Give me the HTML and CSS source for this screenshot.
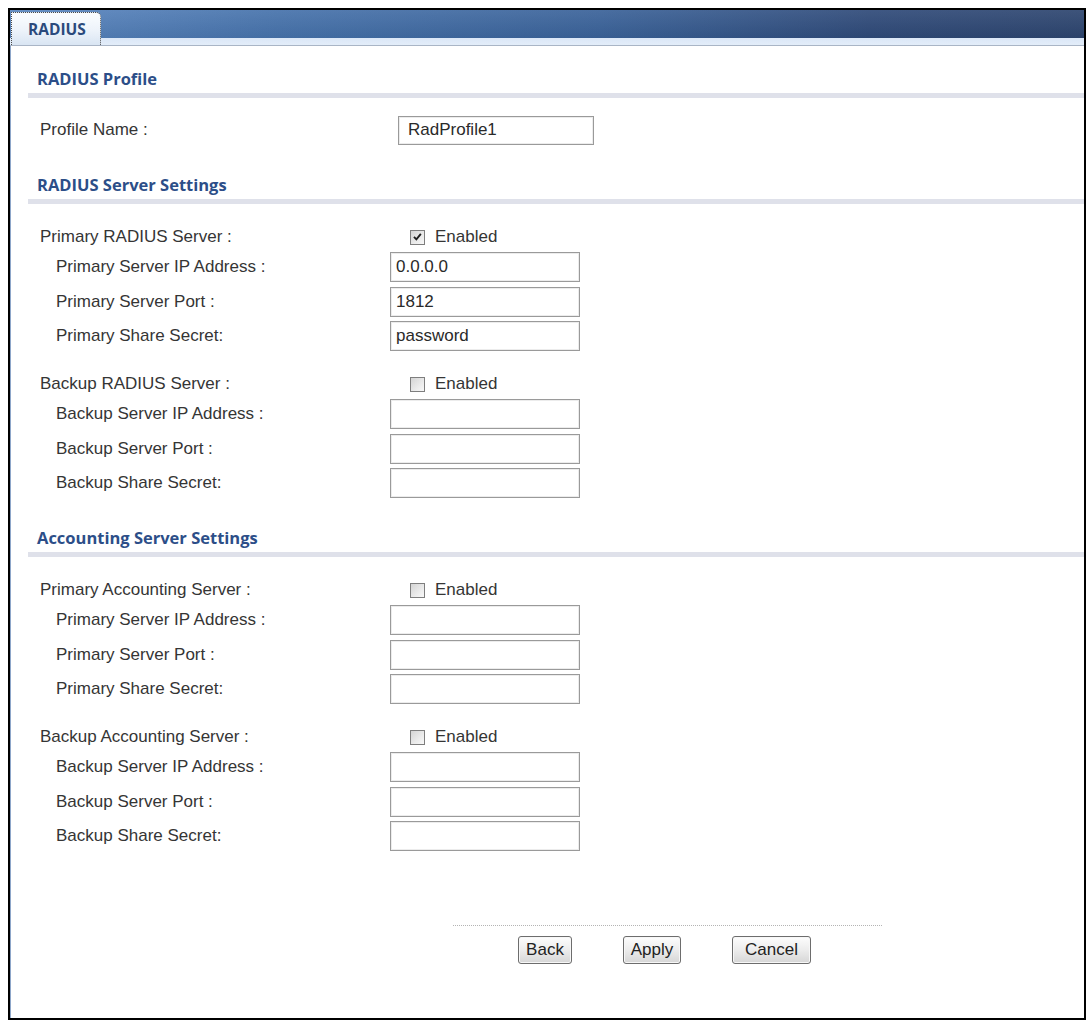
FILE: index.html
```html
<!DOCTYPE html>
<html lang="en">
<head>
<meta charset="utf-8">
<title>RADIUS</title>
<link rel="stylesheet" href="styles.css">
</head>
<body>
<div class="window">
  <div class="tabbar">
    <div class="tab">RADIUS</div>
  </div>

  <div class="content">
    <h2 class="section-title first">RADIUS Profile</h2>
    <div class="row profile-row">
      <span class="label">Profile Name :</span>
      <input class="field field-profile" type="text" value="RadProfile1">
    </div>

    <h2 class="section-title">RADIUS Server Settings</h2>
    <div class="group">
      <div class="row check-row">
        <span class="label">Primary RADIUS Server :</span>
        <span class="check"><span class="box"><svg viewBox="0 0 14 14" width="14" height="14"><path d="M3.2 6.8 L5.8 9.6 L10.6 3.6" fill="none" stroke="#1e1e1e" stroke-width="2"/></svg></span>Enabled</span>
      </div>
      <div class="row"><span class="label sub">Primary Server IP Address :</span><input class="field" type="text" value="0.0.0.0"></div>
      <div class="row"><span class="label sub">Primary Server Port :</span><input class="field" type="text" value="1812"></div>
      <div class="row"><span class="label sub">Primary Share Secret:</span><input class="field" type="text" value="password"></div>
    </div>
    <div class="group">
      <div class="row check-row">
        <span class="label">Backup RADIUS Server :</span>
        <span class="check"><span class="box"></span>Enabled</span>
      </div>
      <div class="row"><span class="label sub">Backup Server IP Address :</span><input class="field" type="text" value=""></div>
      <div class="row"><span class="label sub">Backup Server Port :</span><input class="field" type="text" value=""></div>
      <div class="row"><span class="label sub">Backup Share Secret:</span><input class="field" type="text" value=""></div>
    </div>

    <h2 class="section-title">Accounting Server Settings</h2>
    <div class="group">
      <div class="row check-row">
        <span class="label">Primary Accounting Server :</span>
        <span class="check"><span class="box"></span>Enabled</span>
      </div>
      <div class="row"><span class="label sub">Primary Server IP Address :</span><input class="field" type="text" value=""></div>
      <div class="row"><span class="label sub">Primary Server Port :</span><input class="field" type="text" value=""></div>
      <div class="row"><span class="label sub">Primary Share Secret:</span><input class="field" type="text" value=""></div>
    </div>
    <div class="group">
      <div class="row check-row">
        <span class="label">Backup Accounting Server :</span>
        <span class="check"><span class="box"></span>Enabled</span>
      </div>
      <div class="row"><span class="label sub">Backup Server IP Address :</span><input class="field" type="text" value=""></div>
      <div class="row"><span class="label sub">Backup Server Port :</span><input class="field" type="text" value=""></div>
      <div class="row"><span class="label sub">Backup Share Secret:</span><input class="field" type="text" value=""></div>
    </div>

    <div class="actions">
      <button class="btn btn-back" type="button">Back</button>
      <button class="btn btn-apply" type="button">Apply</button>
      <button class="btn btn-cancel" type="button">Cancel</button>
    </div>
  </div>
</div>
</body>
</html>
```

FILE: styles.css
```css
* {
  box-sizing: border-box;
}

html, body {
  margin: 0;
  padding: 0;
  background: #ffffff;
}

body {
  padding: 8px;
  font-family: "Liberation Sans", Arial, sans-serif;
  color: #333333;
}

.window {
  width: 1078px;
  height: 1012px;
  border: 2px solid #000000;
  box-shadow: inset 1px 0 0 #8da6c9;
  display: flex;
  flex-direction: column;
}

/* Header strip with the tab */
.tabbar {
  height: 36px;
  padding: 2px 0 0 1px;
  background:
    linear-gradient(to bottom, rgba(255,255,255,0.08), rgba(0,0,0,0.05) 28px, transparent 28px),
    linear-gradient(to bottom, transparent 28px, #dbe7f7 28px, #e3edf9 35px),
    linear-gradient(to right, #5a86bf 0%, #4672ab 25%, #3a6299 55%, #2f4a79 80%, #2d456f 100%);
  border-bottom: 1px solid #a9b5c6;
  display: flex;
  align-items: flex-start;
}

.tab {
  width: 90px;
  height: 33px;
  padding: 6px 0 0 16px;
  background: linear-gradient(to bottom, #fbfdff 0%, #edf3fa 55%, #d9e5f3 100%);
  border: 1px dotted #4b4b4b;
  border-bottom: none;
  border-top-right-radius: 5px;
  font-family: "Open Sans", "DejaVu Sans", sans-serif;
  font-weight: 700;
  font-size: 15.5px;
  line-height: 20px;
  color: #2b4a7c;
}

.content {
  flex: 1;
  display: flex;
  flex-direction: column;
}

/* Section headings with their grey rule */
.section-title {
  margin: 30px 0 0 18px;
  padding: 0 0 4px 9px;
  border-bottom: 5px solid #dfe1ea;
  font-family: "Open Sans", "DejaVu Sans", sans-serif;
  font-weight: 700;
  font-size: 16.5px;
  line-height: 20px;
  color: #2c4e88;
}

.section-title.first {
  margin-top: 23px;
}

/* Form rows */
.row {
  display: flex;
  align-items: center;
  height: 30px;
  margin-top: 4.5px;
  padding-left: 30px;
}

.row.check-row,
.check-row + .row {
  margin-top: 0;
}

.profile-row {
  margin-top: 17px;
}

.group {
  margin-top: 18px;
}

.label {
  width: 350px;
  flex: none;
  font-size: 17px;
  line-height: 20px;
  color: #353535;
  white-space: nowrap;
}

.label.sub {
  padding-left: 16px;
}

.field {
  width: 190px;
  height: 30px;
  margin: 0;
  padding: 0 5px;
  border: 1px solid #9a9a9a;
  box-shadow: inset 0 0 0 1px #ececec;
  background: #ffffff;
  font-family: "Liberation Sans", Arial, sans-serif;
  font-size: 17px;
  color: #2a2a2a;
  outline: none;
}

.field-profile {
  width: 196px;
  height: 29px;
  margin-left: 8px;
  padding-left: 9px;
}

.check {
  display: flex;
  align-items: center;
  margin-left: 20px;
  font-size: 17px;
  color: #353535;
}

.box {
  width: 15px;
  height: 15px;
  margin-right: 10px;
  border: 1px solid #7e7e7e;
  background: linear-gradient(135deg, #d4d4d4 0%, #ebebeb 60%, #f8f8f8 100%);
  display: flex;
  align-items: center;
  justify-content: center;
}

.box svg {
  display: block;
}

/* Buttons below the dotted divider */
.actions {
  margin: 74px 0 0 443px;
  width: 429px;
  padding: 10px 0 0 65px;
  border-top: 1px dotted #b4b4b4;
  display: flex;
  gap: 51px;
}

.btn {
  height: 28px;
  padding: 0;
  border: 1px solid #6d6d6d;
  border-radius: 3px;
  background: linear-gradient(to bottom, #fdfdfd 0%, #ececec 50%, #d6d6d6 100%);
  box-shadow: inset 0 0 0 1px #f7f7f7;
  font-family: "Liberation Sans", Arial, sans-serif;
  font-size: 17px;
  color: #222222;
}

.btn-back {
  width: 54px;
}

.btn-apply {
  width: 58px;
}

.btn-cancel {
  width: 79px;
}
```
